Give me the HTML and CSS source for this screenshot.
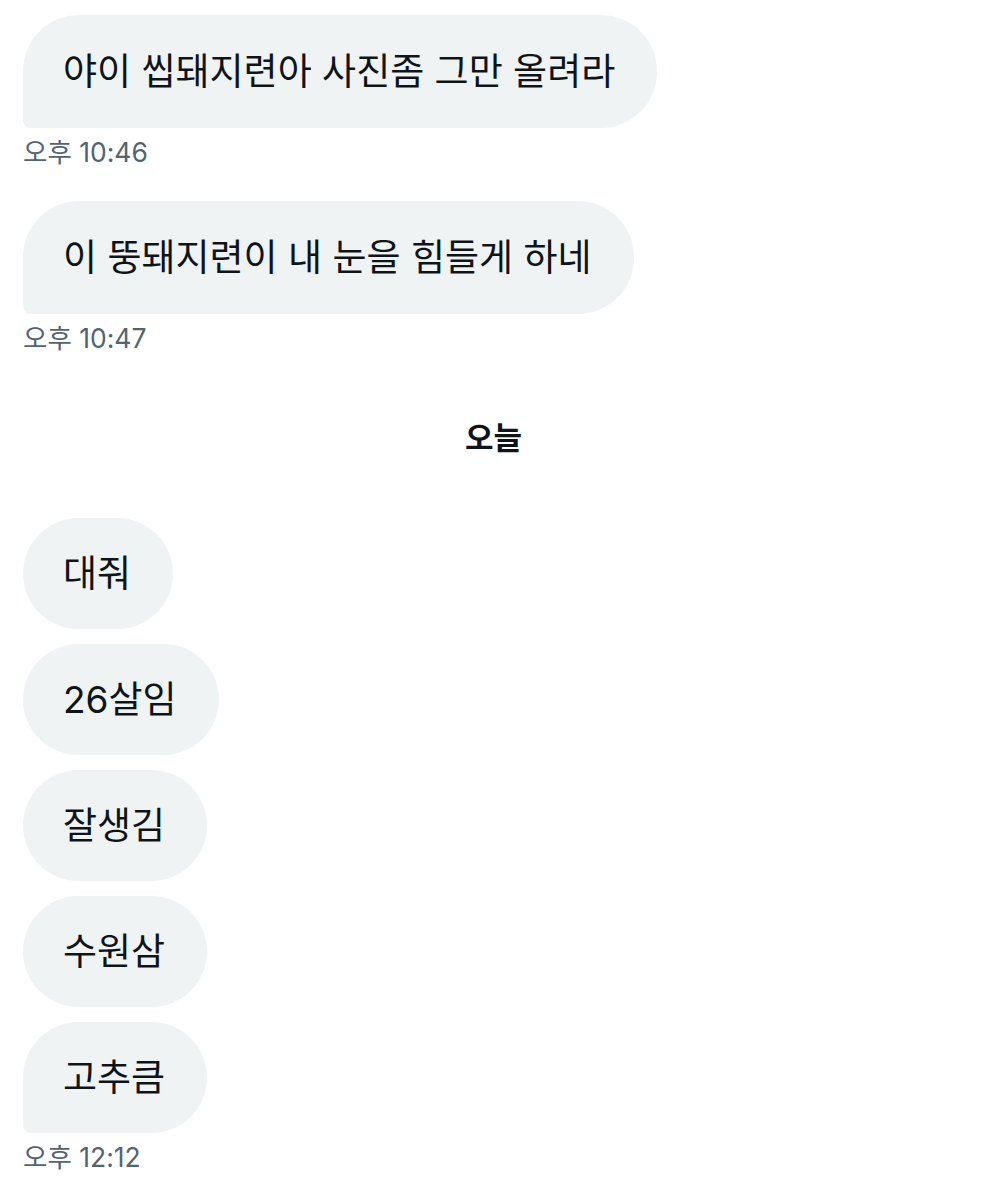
FILE: index.html
```html
<!DOCTYPE html>
<html lang="ko">
<head>
<meta charset="utf-8">
<link rel="stylesheet" href="styles.css">
</head>
<body>
<div class="chat">
  <div class="group g1">
    <div class="bubble last">야이 씹돼지련아 사진좀 그만 올려라</div>
    <div class="time">오후 10:46</div>
  </div>
  <div class="group g2">
    <div class="bubble last">이 뚱돼지련이 내 눈을 힘들게 하네</div>
    <div class="time">오후 10:47</div>
  </div>
  <div class="day">오늘</div>
  <div class="group g3">
    <div class="bubble">대줘</div>
    <div class="bubble">26살임</div>
    <div class="bubble">잘생김</div>
    <div class="bubble">수원삼</div>
    <div class="bubble last">고추큼</div>
    <div class="time">오후 12:12</div>
  </div>
</div>
</body>
</html>
```

FILE: styles.css
```css
html, body {
  margin: 0;
  padding: 0;
  background: #ffffff;
}
.chat {
  padding: 15px 0 0 23px;
  box-sizing: border-box;
  display: flex;
  flex-direction: column;
  font-family: Inter, "Noto Sans CJK KR", sans-serif;
}
.group {
  display: flex;
  flex-direction: column;
  align-items: flex-start;
  gap: 15px;
}
.bubble {
  background: #eff3f4;
  color: #0f1419;
  font-size: 37px;
  height: 111px;
  line-height: 111px;
  padding: 0 42px 0 40px;
  border-radius: 56px;
  white-space: nowrap;
}
.bubble.last {
  border-bottom-left-radius: 8px;
}
.g1 .bubble, .g2 .bubble {
  height: 113px;
  line-height: 113px;
}
.time {
  margin-top: -7px;
  font-size: 26.5px;
  line-height: 32px;
  color: #536471;
}
.g2 {
  margin-top: 33px;
}
.day {
  margin: 66px 23px 0 0;
  text-align: center;
  font-size: 31px;
  font-weight: 700;
  line-height: 36px;
  color: #0f1419;
}
.g3 {
  margin-top: 62px;
}
```
